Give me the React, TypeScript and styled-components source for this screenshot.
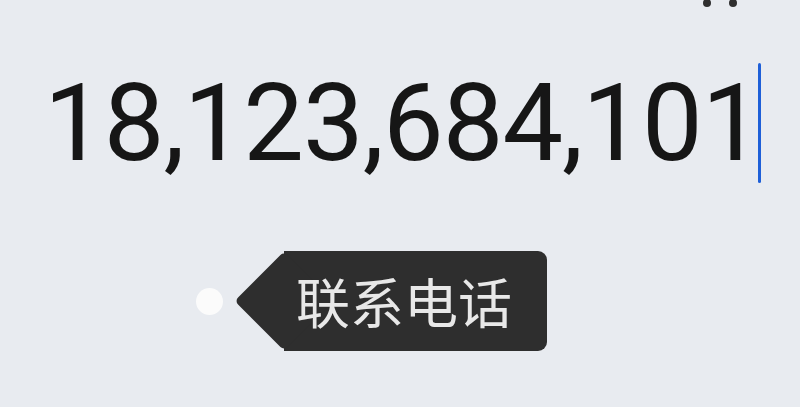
import styled, { createGlobalStyle } from "styled-components";

const GlobalStyle = createGlobalStyle`
  html, body {
    margin: 0;
    padding: 0;
    background: #e8ebf0;
    overflow: hidden;
  }
`;

export default function App() {
  return (
    <>
      <GlobalStyle />
      <Page>
        <MenuRow>
          <Dot />
          <Dot />
        </MenuRow>

        <NumberRow>
          <Digits>18,123,684,101</Digits>
          <Caret />
        </NumberRow>

        <TagRow>
          <Hole />
          <Tag>
            <TagText>联系电话</TagText>
          </Tag>
        </TagRow>
      </Page>
    </>
  );
}

const Page = styled.div`
  width: 800px;
  height: 407px;
  display: flex;
  flex-direction: column;
  background: #e8ebf0;
  overflow: hidden;
`;

const MenuRow = styled.div`
  display: flex;
  justify-content: flex-end;
  gap: 18px;
  padding-right: 63px;
  margin-top: -1px;
  height: 8px;
`;

const Dot = styled.span`
  width: 8px;
  height: 8px;
  border-radius: 50%;
  background: #2f2f2f;
`;

const NumberRow = styled.div`
  display: flex;
  align-items: center;
  height: 120px;
  margin-top: 56px;
  padding-left: 44px;
`;

const Digits = styled.span`
  font-family: Roboto, "Liberation Sans", sans-serif;
  font-size: 108px;
  line-height: 1;
  color: #161616;
  letter-spacing: -1px;
`;

const Caret = styled.span`
  width: 3px;
  height: 120px;
  margin-left: -3px;
  border-radius: 1.5px;
  background: #1e5fd8;
`;

const TagRow = styled.div`
  display: flex;
  align-items: center;
  margin-top: 68px;
  padding-left: 196px;
`;

const Hole = styled.span`
  width: 27px;
  height: 27px;
  border-radius: 50%;
  background: #fbfbfb;
`;

const Tag = styled.div`
  position: relative;
  display: flex;
  align-items: center;
  height: 100px;
  margin-left: 61px;
  padding: 0 35px 0 12px;
  background: #2e2e2e;
  border-radius: 0 9px 9px 0;

  &::before {
    content: "";
    position: absolute;
    left: -35px;
    top: 15px;
    width: 70px;
    height: 70px;
    background: #2e2e2e;
    border-radius: 5px;
    transform: rotate(45deg);
  }
`;

const TagText = styled.span`
  position: relative;
  font-family: "Noto Sans CJK SC", sans-serif;
  font-size: 54px;
  line-height: 1;
  color: #e8e8e8;
`;
